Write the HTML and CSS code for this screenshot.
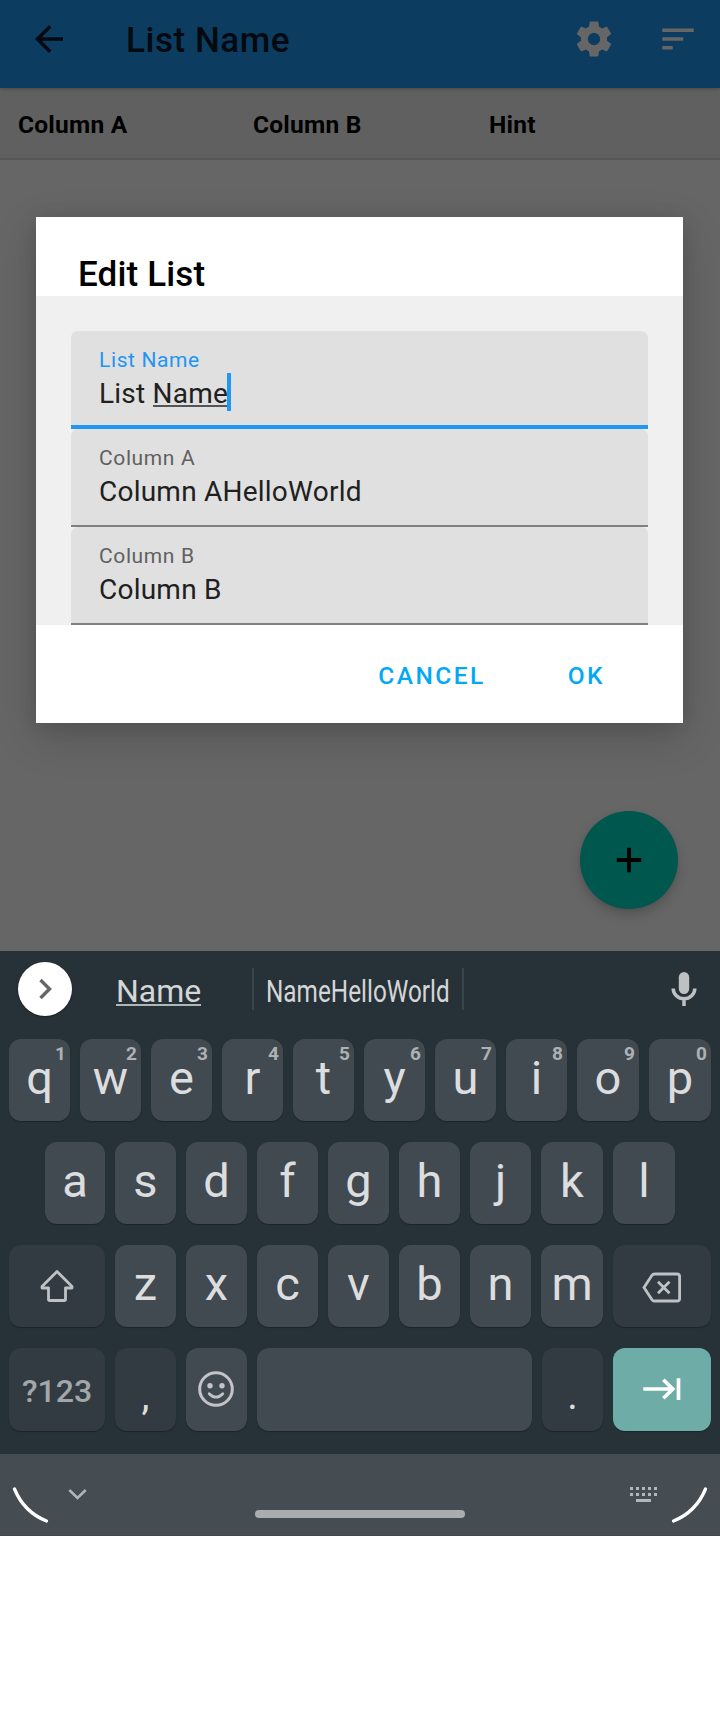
FILE: index.html
```html
<!DOCTYPE html>
<html lang="en">
<head>
<meta charset="utf-8">
<title>Edit List</title>
<link rel="stylesheet" href="styles.css">
</head>
<body>
<main class="app">
  <header class="appbar">
    <svg class="icon" viewBox="0 0 24 24"><path d="M20 11H7.83l5.59-5.59L12 4l-8 8 8 8 1.41-1.41L7.83 13H20v-2z"/></svg>
    <h1 class="appbar-title">List Name</h1>
    <svg class="icon icon-light" viewBox="0 0 24 24"><path d="M19.43 12.98c.04-.32.07-.64.07-.98s-.03-.66-.07-.98l2.11-1.65c.19-.15.24-.42.12-.64l-2-3.46c-.12-.22-.39-.3-.61-.22l-2.49 1c-.52-.4-1.08-.73-1.69-.98l-.38-2.65C14.46 2.18 14.25 2 14 2h-4c-.25 0-.46.18-.49.42l-.38 2.65c-.61.25-1.17.59-1.69.98l-2.49-1c-.23-.09-.49 0-.61.22l-2 3.46c-.13.22-.07.49.12.64l2.11 1.65c-.04.32-.07.65-.07.98s.03.66.07.98l-2.11 1.65c-.19.15-.24.42-.12.64l2 3.46c.12.22.39.3.61.22l2.49-1c.52.4 1.08.73 1.69.98l.38 2.65c.03.24.24.42.49.42h4c.25 0 .46-.18.49-.42l.38-2.65c.61-.25 1.17-.59 1.69-.98l2.49 1c.23.09.49 0 .61-.22l2-3.46c.12-.22.07-.49-.12-.64l-2.11-1.65zM12 15.5c-1.93 0-3.5-1.57-3.5-3.5s1.57-3.5 3.5-3.5 3.5 1.57 3.5 3.5-1.57 3.5-3.5 3.5z"/></svg>
    <svg class="icon icon-light" viewBox="0 0 24 24"><path d="M3 18h6v-2H3v2zM3 6v2h18V6H3zm0 7h12v-2H3v2z"/></svg>
  </header>
  <div class="columns"><span>Column A</span><span>Column B</span><span>Hint</span></div>
  <button class="fab"><svg class="icon" viewBox="0 0 24 24"><path d="M19 13.1h-5.9V19h-2.2v-5.9H5v-2.2h5.9V5h2.2v5.9H19z"/></svg></button>

  <section class="dialog">
    <h2 class="dialog-title">Edit List</h2>
    <div class="dialog-body">
      <div class="field field-active">
        <div class="label">List Name</div>
        <div class="value">List <span class="composing">Name</span><i class="caret"></i></div>
      </div>
      <div class="field">
        <div class="label">Column A</div>
        <div class="value">Column AHelloWorld</div>
      </div>
      <div class="field">
        <div class="label">Column B</div>
        <div class="value">Column B</div>
      </div>
    </div>
    <div class="actions"><button class="action">CANCEL</button><button class="action">OK</button></div>
  </section>
</main>

<section class="keyboard">
  <div class="suggestions">
    <span class="expand"><svg width="54" height="54" viewBox="0 0 54 54"><path d="M22.500 18L31.500 27L22.500 36" fill="none" stroke="#666" stroke-width="3.400"/></svg></span>
    <span class="word"><span class="word-main">Name</span></span>
    <span class="word word-mid"><span class="condensed">NameHelloWorld</span></span>
    <svg class="mic" width="26" height="36" viewBox="0 0 26 36"><rect x="7.800" y="1" width="10.400" height="22" rx="5.200" fill="#bec1c4"/><path d="M2.200 17.500a10.800 10.300 0 0 0 21.600 0M13 28v7" fill="none" stroke="#bec1c4" stroke-width="3.500"/></svg>
  </div>
  <div class="row row-1">
    <div class="key">q<sup>1</sup></div><div class="key">w<sup>2</sup></div><div class="key">e<sup>3</sup></div><div class="key">r<sup>4</sup></div><div class="key">t<sup>5</sup></div><div class="key">y<sup>6</sup></div><div class="key">u<sup>7</sup></div><div class="key">i<sup>8</sup></div><div class="key">o<sup>9</sup></div><div class="key">p<sup>0</sup></div>
  </div>
  <div class="row row-2">
    <div class="key">a</div><div class="key">s</div><div class="key">d</div><div class="key">f</div><div class="key">g</div><div class="key">h</div><div class="key">j</div><div class="key">k</div><div class="key">l</div>
  </div>
  <div class="row row-3">
    <div class="key dim"><svg width="96" height="82" viewBox="0 0 96 82"><path d="M48 26.500L63 41.400V43H56.500V54.200a1.300 1.300 0 0 1-1.300 1.300H40.800a1.300 1.300 0 0 1-1.300-1.300V43H33V41.400Z" fill="none" stroke="#bec2c5" stroke-width="2.800" stroke-linejoin="round"/></svg></div>
    <div class="key">z</div><div class="key">x</div><div class="key">c</div><div class="key">v</div><div class="key">b</div><div class="key">n</div><div class="key">m</div>
    <div class="key dim"><svg width="98" height="82" viewBox="0 0 98 82"><path d="M41.500 29H64a2.600 2.600 0 0 1 2.600 2.600V53.400a2.600 2.600 0 0 1-2.600 2.600H41.500a3 3 0 0 1-2.500-1.300L31 42.500L39 30.300a3 3 0 0 1 2.500-1.300ZM45 36.700L56.500 48.300M56.500 36.700L45 48.300" fill="none" stroke="#bec2c5" stroke-width="2.800"/></svg></div>
  </div>
  <div class="row row-4">
    <div class="key dim symbols">?123</div>
    <div class="key dim punct">,</div>
    <div class="key"><svg width="61" height="83" viewBox="0 0 61 83"><circle cx="30" cy="41" r="16.300" fill="none" stroke="#c2c4c7" stroke-width="3"/><circle cx="24" cy="37.700" r="2.700" fill="#c2c4c7"/><circle cx="36" cy="37.700" r="2.700" fill="#c2c4c7"/><path d="M23.200 45.700Q30 52.500 36.800 45.700" fill="none" stroke="#c2c4c7" stroke-width="2.800" stroke-linecap="round"/></svg></div>
    <div class="key"></div>
    <div class="key dim punct">.</div>
    <div class="key enter"><svg width="98" height="83" viewBox="0 0 98 83"><path d="M30.300 41H60M50.300 31.700L59.800 41L50.300 50.300M65.500 30.300V52" fill="none" stroke="#fff" stroke-width="3.700"/></svg></div>
  </div>
</section>

<footer class="navbar">
  <svg class="corner" width="40" height="40" viewBox="0 0 40 40"><path d="M4.500 5Q14 28 36.500 37" fill="none" stroke="#fff" stroke-width="3.300" stroke-linecap="round"/></svg>
  <svg class="hide" width="20" height="14" viewBox="0 0 20 14"><path d="M2.300 2L10.500 10L18.700 2" fill="none" stroke="#b1b5b7" stroke-width="2.500"/></svg>
  <span class="home"></span>
  <svg class="switch" width="27" height="15" viewBox="0 0 27 15"><path d="M0 1.500H27M0 7.500H27" stroke="#b4b7ba" stroke-width="3" stroke-dasharray="3 3"/><path d="M6 13.500H21" stroke="#b4b7ba" stroke-width="3"/></svg>
  <svg class="corner corner-right" width="40" height="40" viewBox="0 0 40 40"><path d="M35.500 5Q26 28 3.500 37" fill="none" stroke="#fff" stroke-width="3.300" stroke-linecap="round"/></svg>
</footer>
</body>
</html>
```
FILE: styles.css
```css
* { box-sizing: border-box; }
body { margin: 0; width: 720px; min-height: 1712px; background: #fff; font-family: Roboto, sans-serif; }
h1, h2 { margin: 0; font-weight: 500; font-size: 35px; line-height: 42px; }
button { border: 0; background: none; padding: 0; margin: 0; font-family: inherit; }
svg { display: block; flex: none; }

.app { position: relative; height: 951px; background: #666; overflow: hidden; }
.icon { width: 42px; height: 42px; fill: #000; }
.icon-light { fill: #666; }
.appbar { display: flex; align-items: center; height: 88px; padding: 0 21px 10px 28px; background: #0c3d60; position: relative; box-shadow: 0 1px 4px rgba(0,0,0,.25); }
.appbar-title { flex: 1; margin-left: 56px; padding-top: 4px; letter-spacing: .55px; color: #03090f; }
.appbar .icon:first-child { fill: #03090f; }
.appbar .icon-light + .icon-light { margin-left: 42px; }
.columns { display: grid; grid-template-columns: 235px 236px 1fr; height: 72px; padding: 22px 0 0 18px; border-bottom: 2px solid #575757; background: #606060; font-size: 24.5px; line-height: 30px; font-weight: 700; letter-spacing: .25px; color: #000; }

.fab { position: absolute; left: 580px; top: 811px; width: 98px; height: 98px; border-radius: 50%; background: #00574e; display: grid; place-items: center; box-shadow: 0 6px 12px rgba(0,0,0,.18), 0 1px 3px rgba(0,0,0,.08); }

.dialog { position: absolute; left: 36px; top: 217px; width: 647px; height: 506px; background: #fff; box-shadow: 0 14px 40px rgba(0,0,0,.17), 0 2px 18px rgba(0,0,0,.1); }
.dialog-title { height: 79px; padding: 37px 0 0 42px; letter-spacing: .15px; color: #000; }
.dialog-body { height: 329px; padding: 35px 35px 0; background: #f0f0f0; }
.field { height: 98px; padding: 16px 28px 0; border-radius: 7px 7px 0 0; background: linear-gradient(#808080, #808080) bottom / 100% 2px no-repeat #e0e0e0; }
.field-active { background: linear-gradient(#2196f3, #2196f3) bottom / 100% 4px no-repeat #e0e0e0; }
.label { font-size: 21px; line-height: 27px; letter-spacing: .62px; color: #606060; }
.field-active .label { color: #2196f3; }
.value { display: flex; white-space: pre; font-size: 28px; line-height: 40px; letter-spacing: .23px; color: #202020; }
.composing { background: linear-gradient(#555, #555) 0 31px / 100% 2px no-repeat; }
.caret { width: 4px; height: 38px; margin: -1px 0 0 -1px; background: #2196f3; }
.actions { display: flex; justify-content: flex-end; padding: 37px 78px 0 0; gap: 82px; }
.action { font-size: 24.5px; line-height: 28px; font-weight: 500; letter-spacing: 2.45px; color: #03a9f4; }

.keyboard { height: 503px; background: #273238; color: #dcdddf; }
.suggestions { display: flex; height: 88px; padding: 11px 23px 0 18px; }
.expand { width: 54px; height: 54px; border-radius: 50%; background: #fff; box-shadow: 0 1px 2px rgba(0,0,0,.4); }
.word { width: 180px; padding: 10px 0 0 44px; font-size: 32px; line-height: 38px; color: #d4d6d7; }
.word-main { display: inline-block; background: linear-gradient(#aeb6b8, #aeb6b8) 0 32px / 100% 2px no-repeat; }
.word-mid { width: 212px; height: 42px; margin-top: 6px; padding: 4px 0 0 12px; border: solid #3b464c; border-width: 0 2px; }
.condensed { display: block; transform: scaleX(.76); transform-origin: 0 0; }
.mic { margin: 9px 0 0 auto; }
.row { display: grid; grid-template-rows: 100%; column-gap: 10px; height: 82px; margin-bottom: 21px; padding-left: 9px; }
.row-1 { grid-template-columns: repeat(8, 61px) 62px 62px; }
.row-2 { grid-template-columns: 60px repeat(6, 61px) 62px 62px; padding-left: 45px; }
.row-3 { grid-template-columns: 96px repeat(6, 61px) 62px 98px; }
.row-4 { grid-template-columns: 96px 61px 61px 275px 61px 98px; height: 83px; margin-bottom: 0; }
.key { position: relative; border-radius: 12px; background: #424a51; box-shadow: 0 1px 1px #1b2429; text-align: center; font-size: 47px; line-height: 78px; }
.key sup { position: absolute; top: 4px; right: 4px; font-size: 19px; line-height: 21px; font-weight: 700; color: #adb1b4; }
.dim { background: #313b41; }
.symbols { font-size: 32px; line-height: 86px; font-weight: 500; color: #a3a7aa; }
.punct { font-size: 40px; line-height: 95px; }
.enter { background: #6eaca8; }

.navbar { display: flex; align-items: flex-start; height: 82px; background: #454d52; border-bottom: 1px solid #3e474b; }
.corner { margin: 30px 0 0 10px; }
.hide { margin: 34px 0 0 17px; }
.home { width: 210px; height: 8px; margin: 56px 0 0 168px; border-radius: 4px; background: #a9adb0; }
.switch { margin: 33px 0 0 165px; }
.corner-right { margin-left: 13px; }
```
